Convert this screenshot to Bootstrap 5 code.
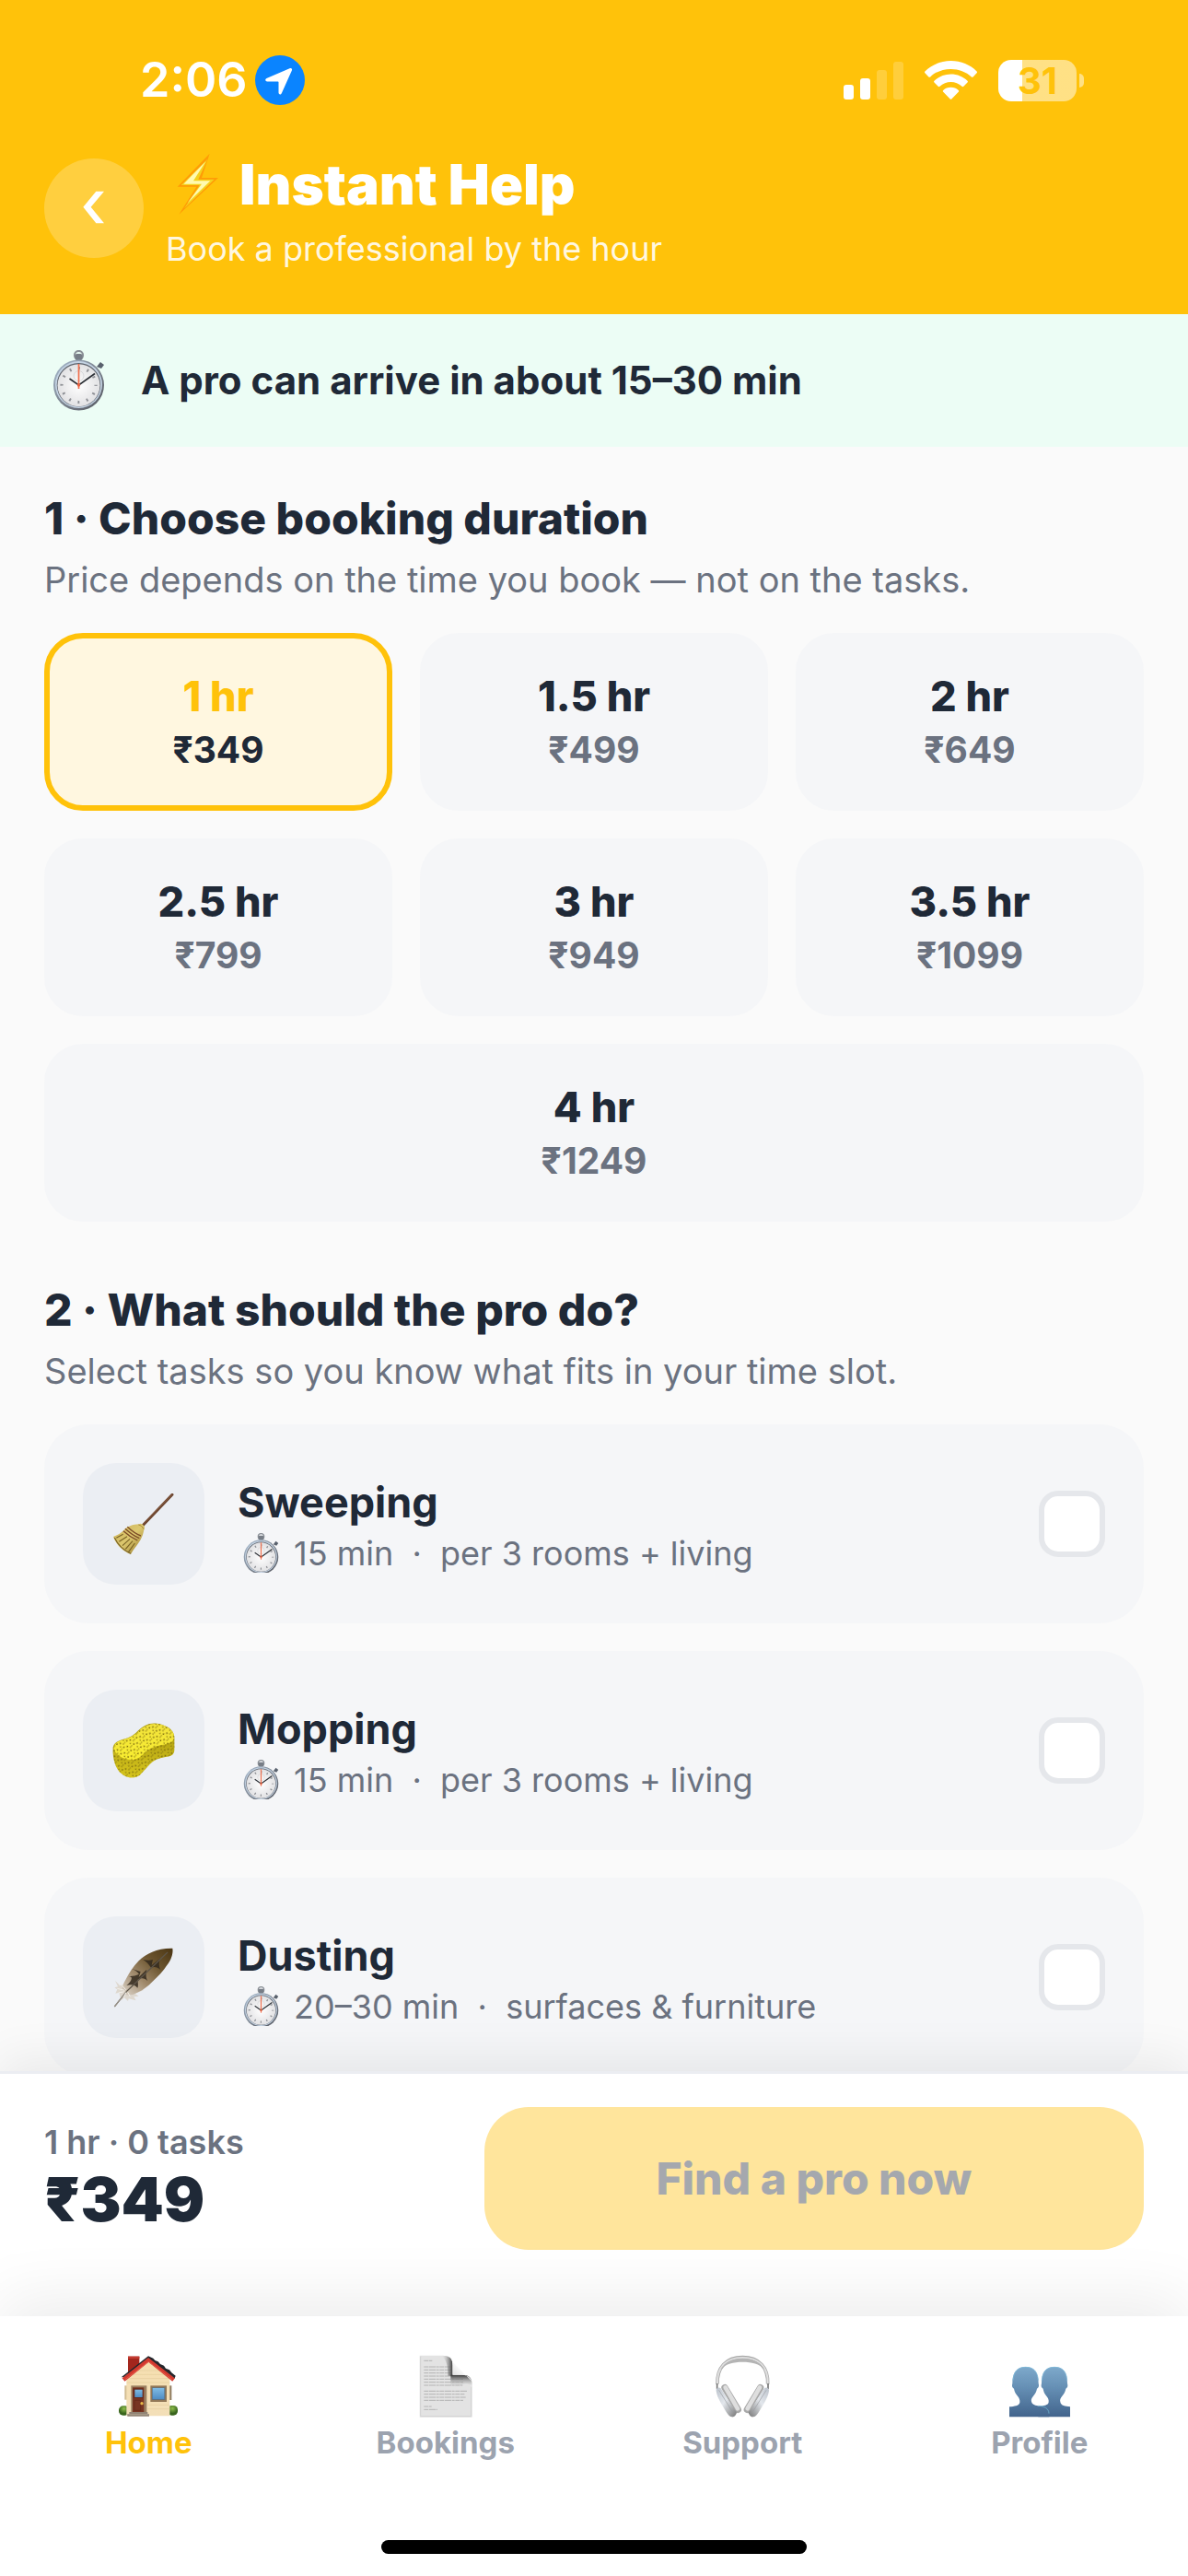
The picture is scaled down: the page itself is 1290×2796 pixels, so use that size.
<!DOCTYPE html>
<html lang="en">
<head>
<meta charset="utf-8">
<meta name="viewport" content="width=device-width, initial-scale=1">
<title>Instant Help</title>
<link rel="stylesheet" href="https://cdn.jsdelivr.net/npm/bootstrap@5.3.0/dist/css/bootstrap.min.css">
<style>
  :root { --brand:#ffc20a; --ink:#1f2937; --muted:#6b7280; --faint:#9ca3af; --tile:#f5f6f8; }
  body { font-family: Inter, "Liberation Sans", sans-serif; background:#fafafa; color:var(--ink); height:100vh; }
  .px-page { padding-left:48px; padding-right:48px; }
  .app-head { background:var(--brand); color:#fff; padding-bottom:49px; }
  .status { padding:60px 113px 46px 152px; }
  .clock { font-size:52px; line-height:54px; font-weight:600; }
  .status-left { gap:8px; }
  .status-right { gap:23px; }
  .battery { gap:3px; }
  .battery-body { width:85px; height:45px; border-radius:14px; background:linear-gradient(90deg, #fff 26px, rgba(255,255,255,.5) 26px); color:var(--brand); font-size:40px; line-height:45px; font-weight:700; }
  .battery-nub { width:5px; height:15px; border-radius:0 5px 5px 0; background:rgba(255,255,255,.5); }
  .back { width:108px; height:108px; background:rgba(255,255,255,.22); border:0; }
  .head-row { gap:24px; }
  .head-title { font-size:60px; line-height:80px; font-weight:900; margin:0; gap:22px; padding-left:12px; }
  .head-sub { font-size:36px; line-height:44px; margin:8px 0 0; color:rgba(255,255,255,.9); }
  .eta { background:#ecfdf5; height:144px; gap:30px; font-size:42px; line-height:54px; font-weight:700; }
  .eta-icon { width:75px; }
  .content { flex:1 1 0; min-height:0; overflow-y:auto; scrollbar-width:none; padding-top:48px; padding-bottom:48px; }
  .content::-webkit-scrollbar { display:none; }
  .sec-title { font-size:48px; line-height:60px; font-weight:800; margin:0 0 12px; }
  .sec-sub { font-size:38px; line-height:48px; color:var(--muted); margin:0 0 34px; }
  .slots { --bs-gutter-x:30px; --bs-gutter-y:30px; margin-bottom:66px; }
  .slot { display:flex; flex-direction:column; align-items:center; gap:7px; padding:36px 12px; border:6px solid var(--tile); border-radius:42px; background:var(--tile); cursor:pointer; }
  .slot-time { font-size:45px; line-height:54px; font-weight:800; }
  .slot-price { font-size:39px; line-height:48px; font-weight:700; color:var(--muted); }
  .btn-check:checked + .slot { background:#fff7e0; border-color:var(--brand); }
  .btn-check:checked + .slot .slot-time { color:var(--brand); }
  .btn-check:checked + .slot .slot-price { color:var(--ink); }
  .tasks { gap:30px; }
  .task { background:var(--tile); border-radius:48px; padding:42px; gap:36px; cursor:pointer; }
  .task-icon { width:132px; height:132px; border-radius:36px; background:#ebeef3; }
  .task-text { padding-top:3px; }
  .task-name { font-size:45px; line-height:54px; font-weight:700; margin-bottom:6px; }
  .task-meta { font-size:36px; line-height:44px; color:var(--muted); gap:16px; padding-left:6px; }
  .task .form-check-input { width:72px; height:72px; border:6px solid #e5e7eb; border-radius:21px; margin:0; background-color:#fff; }
  .book-bar { z-index:2; background:#fff; border-top:3px solid #ebedf2; padding-top:36px; padding-bottom:72px; box-shadow:0 -12px 48px rgba(0,0,0,.07); }
  .sum-line { font-size:36px; line-height:44px; font-weight:600; color:var(--muted); }
  .sum-price { font-size:66px; line-height:80px; font-weight:900; }
  .cta { width:60%; border:0; border-radius:48px; padding:48px; font-size:48px; line-height:59px; font-weight:800; background:#ffe59c; color:#a5a8ae; }
  .tabs { z-index:3; background:#fff; padding:42px 0 24px; box-shadow:0 -18px 66px rgba(0,0,0,.075); }
  .tab-link { gap:7px; font-size:33px; line-height:40px; font-weight:700; color:var(--faint); text-decoration:none; }
  .tab-link.active { color:var(--brand); }
  .home-bar { width:462px; max-width:60%; height:15px; border-radius:8px; background:#000; margin:86px auto 0; }
  svg { display:block; flex:none; }
</style>
<script src="https://cdn.jsdelivr.net/npm/bootstrap@5.3.0/dist/js/bootstrap.bundle.min.js"></script>
</head>
<body class="d-flex flex-column overflow-hidden">

<svg width="0" height="0" class="position-absolute" aria-hidden="true">
  <defs>
    <linearGradient id="rim" x1="0" y1="0" x2="1" y2="1"><stop offset="0" stop-color="#a9bdd2"/><stop offset=".5" stop-color="#7d8590"/><stop offset="1" stop-color="#53565e"/></linearGradient>
    <radialGradient id="dial"><stop offset="0" stop-color="#fff"/><stop offset="1" stop-color="#e2e2e4"/></radialGradient>
    <symbol id="watch" viewBox="0 0 57 66">
      <circle cx="28.500" cy="5.500" r="4.600" fill="none" stroke="#8b9097" stroke-width="2"/>
      <rect x="24.500" y="4" width="8" height="7" rx="2" fill="#777d86"/>
      <path d="M48 18l4-5 4 3-3 4z" fill="#59616d"/>
      <circle cx="28.500" cy="38" r="27.500" fill="url(#rim)"/>
      <circle cx="28.500" cy="37.500" r="25.500" fill="#c4d3e3"/>
      <circle cx="28.500" cy="37.800" r="23.800" fill="#5e636c"/>
      <circle cx="28.500" cy="38.200" r="23" fill="url(#dial)"/>
      <circle cx="28.500" cy="38" r="18.500" fill="none" stroke="#8f9196" stroke-width="3.200" stroke-dasharray="1.900 7.787" stroke-dashoffset="1"/>
      <circle cx="28.500" cy="28" r="5.500" fill="none" stroke="#cfd0d3" stroke-width=".8"/>
      <path d="M18.500 31l10 7L46 25.500" fill="none" stroke="#2c3036" stroke-width="1.700"/>
      <path d="M28.500 15v27" stroke="#f0704f" stroke-width="1.700"/>
      <circle cx="28.500" cy="38" r="1.700" fill="#e8603f"/>
    </symbol>
  </defs>
</svg>

<header class="app-head">
  <div class="status d-flex justify-content-between align-items-center">
    <div class="status-left d-flex align-items-center">
      <span class="clock">2:06</span>
      <svg width="54" height="54" viewBox="0 0 54 54" aria-hidden="true"><circle cx="27" cy="27" r="27" fill="#0a84ff"/><path d="M37.500 14.200c1.800-.8 3.200.4 2.400 2.400L28.800 41.200c-.9 1.900-3.300 1.500-3.300-.6V29.200c0-.5-.3-.8-.8-.8H13.200c-2.200 0-2.700-2.400-.7-3.300z" fill="#fff"/></svg>
    </div>
    <div class="status-right d-flex align-items-center">
      <svg width="65" height="42" viewBox="0 0 65 42" fill="#fff" aria-hidden="true"><rect y="26" width="11" height="16" rx="3"/><rect x="18" y="19" width="11" height="23" rx="3"/><rect x="36" y="10" width="11" height="32" rx="3" opacity=".2"/><rect x="54" y="1" width="11" height="41" rx="3" opacity=".2"/></svg>
      <svg width="57" height="42" viewBox="0 0 57 42" fill="#fff" aria-hidden="true"><path d="M28.500 0C17.500 0 7.500 4.300.4 11.400c-.6.600-.6 1.200 0 1.800l4 4.200c.6.600 1.200.6 1.800 0C12 11.900 19.900 8.900 28.500 8.900s16.500 3 22.300 8.500c.6.600 1.200.6 1.800 0l4-4.200c.6-.6.600-1.200 0-1.800C49.500 4.300 39.500 0 28.500 0z"/><path d="M28.500 14.500c-7 0-13.300 2.700-18 7.200-.6.600-.6 1.200 0 1.800l4.200 4.300c.6.600 1.200.5 1.800 0 3.300-3 7.500-4.800 12-4.800s8.700 1.800 12 4.800c.6.500 1.200.6 1.800 0l4.200-4.300c.6-.6.600-1.200 0-1.800-4.700-4.500-11-7.200-18-7.200z"/><path d="M28.500 28.700c-3.200 0-6.100 1.200-8.300 3.200-.6.500-.6 1.200 0 1.800l7.300 7.600c.6.700 1.400.7 2 0l7.300-7.600c.6-.6.600-1.300 0-1.800-2.200-2-5.100-3.200-8.300-3.200z"/></svg>
      <div class="battery d-flex align-items-center"><span class="battery-body text-center">31</span><span class="battery-nub"></span></div>
    </div>
  </div>
  <div class="head-row px-page d-flex align-items-center">
    <button type="button" class="back rounded-circle d-flex align-items-center justify-content-center flex-shrink-0 p-0" aria-label="Back">
      <svg width="26" height="38" viewBox="174 167 78 114"><path d="M220 169h26l-43 51 43 53h-26l-42-53z" fill="#fff"/></svg>
    </button>
    <div>
      <h1 class="head-title d-flex align-items-center">
        <svg width="46" height="68" viewBox="486 52 138 204" aria-hidden="true"><path d="M593 54L488 162h62L493 252l128-119h-54z" fill="#ff9c06"/><path d="M586 72L500 157h60l-50 76 98-95h-52z" fill="#f5d21e"/><path d="M580 80L508 153h59l-46 62 74-72h-55z" fill="#fffbb0"/></svg>
        <span>Instant Help</span>
      </h1>
      <p class="head-sub">Book a professional by the hour</p>
    </div>
  </div>
</header>

<div class="eta px-page d-flex align-items-center">
  <div class="eta-icon d-flex justify-content-center"><svg width="57" height="66" aria-hidden="true"><use href="#watch"/></svg></div>
  <span>A pro can arrive in about 15–30 min</span>
</div>

<main class="content px-page">
  <h2 class="sec-title">1 · Choose booking duration</h2>
  <p class="sec-sub">Price depends on the time you book — not on the tasks.</p>
  <div class="slots row row-cols-3">
    <div class="col"><input class="btn-check" type="radio" name="slot" id="s1" checked><label class="slot" for="s1"><span class="slot-time">1 hr</span><span class="slot-price">₹349</span></label></div>
    <div class="col"><input class="btn-check" type="radio" name="slot" id="s2"><label class="slot" for="s2"><span class="slot-time">1.5 hr</span><span class="slot-price">₹499</span></label></div>
    <div class="col"><input class="btn-check" type="radio" name="slot" id="s3"><label class="slot" for="s3"><span class="slot-time">2 hr</span><span class="slot-price">₹649</span></label></div>
    <div class="col"><input class="btn-check" type="radio" name="slot" id="s4"><label class="slot" for="s4"><span class="slot-time">2.5 hr</span><span class="slot-price">₹799</span></label></div>
    <div class="col"><input class="btn-check" type="radio" name="slot" id="s5"><label class="slot" for="s5"><span class="slot-time">3 hr</span><span class="slot-price">₹949</span></label></div>
    <div class="col"><input class="btn-check" type="radio" name="slot" id="s6"><label class="slot" for="s6"><span class="slot-time">3.5 hr</span><span class="slot-price">₹1099</span></label></div>
    <div class="col-12"><input class="btn-check" type="radio" name="slot" id="s7"><label class="slot" for="s7"><span class="slot-time">4 hr</span><span class="slot-price">₹1249</span></label></div>
  </div>

  <h2 class="sec-title">2 · What should the pro do?</h2>
  <p class="sec-sub">Select tasks so you know what fits in your time slot.</p>
  <div class="tasks d-flex flex-column">
    <label class="task d-flex align-items-center" for="t1">
      <span class="task-icon d-flex align-items-center justify-content-center flex-shrink-0">
        <svg width="66" height="66" viewBox="128 152 198 198" aria-hidden="true">
          <defs><linearGradient id="straw" x1="0" y1="0" x2="1" y2="1"><stop offset="0" stop-color="#cdb35a"/><stop offset=".5" stop-color="#dcc76e"/><stop offset="1" stop-color="#94782a"/></linearGradient></defs>
          <path d="M320 156L224 256" stroke="#6d4630" stroke-width="9" stroke-linecap="round"/>
          <path d="M319 155L224 252" stroke="#94664a" stroke-width="2"/>
          <path d="M212 252c5-4 12 0 17 7 3 4-1 9-2 16-3 14-8 26-17 38-8 12-17 22-25 37-24-9-46-28-57-57 14-6 26-12 34-21 12-13 30-19 50-20z" fill="url(#straw)"/>
          <path d="M138 297l22-12M147 309l26-17M158 322l24-22M168 333l23-26M178 342l20-28M132 296c10 22 28 40 53 52" stroke="#7a6324" stroke-width="3.500" fill="none"/>
          <path d="M174 261c13 12 27 24 44 29M167 267c14 13 29 24 46 31M161 274c13 12 29 23 46 31" stroke="#7b4a26" stroke-width="4" fill="none"/>
          <path d="M210 254c7 1 14 7 17 14" stroke="#a88a3d" stroke-width="3" fill="none"/>
        </svg>
      </span>
      <span class="task-text flex-grow-1">
        <span class="task-name d-block">Sweeping</span>
        <span class="task-meta d-flex align-items-center"><svg width="39" height="43" viewBox="0 0 57 63" aria-hidden="true"><use href="#watch" width="57" height="66"/></svg><span>15 min &nbsp;·&nbsp; per 3 rooms + living</span></span>
      </span>
      <input class="form-check-input flex-shrink-0" type="checkbox" id="t1">
    </label>

    <label class="task d-flex align-items-center" for="t2">
      <span class="task-icon d-flex align-items-center justify-content-center flex-shrink-0">
        <svg width="68" height="68" viewBox="125 145 204 204" aria-hidden="true">
          <defs>
            <linearGradient id="foam" x1="0" y1="0" x2="0" y2="1"><stop offset="0" stop-color="#f1e23c"/><stop offset="1" stop-color="#f9ee30"/></linearGradient>
            <linearGradient id="foamside" x1="0" y1="0" x2="0" y2="1"><stop offset="0" stop-color="#a8980f"/><stop offset="1" stop-color="#d6c51c"/></linearGradient>
            <pattern id="pores" width="25" height="23" patternUnits="userSpaceOnUse" patternTransform="rotate(24)"><g fill="#7d6c10"><circle cx="4" cy="5" r="2.600"/><circle cx="14" cy="3" r="2"/><circle cx="20" cy="12" r="2.700"/><circle cx="9" cy="15" r="2.200"/><circle cx="16" cy="20" r="1.900"/></g></pattern>
          </defs>
          <path d="M127 238c2-18 20-24 42-30 14-4 24-10 38-24 20-20 44-30 70-24 28 7 48 20 50 42v42c0 12-5 19-17 22-20 4-38 6-54 18-16 14-28 30-40 42-18 14-42 13-62-4-18-15-29-46-27-84z" fill="url(#foamside)"/>
          <path d="M129 238c3-17 20-23 42-29 14-4 24-10 38-24 20-20 44-29 68-24 28 7 46 20 49 38 1 15-7 22-22 26-24 6-44 7-60 19-16 12-30 29-46 32-32 5-66-15-69-38z" fill="url(#foam)"/>
          <path d="M127 238c2-18 20-24 42-30 14-4 24-10 38-24 20-20 44-30 70-24 28 7 48 20 50 42v42c0 12-5 19-17 22-20 4-38 6-54 18-16 14-28 30-40 42-18 14-42 13-62-4-18-15-29-46-27-84z" fill="url(#pores)"/>
        </svg>
      </span>
      <span class="task-text flex-grow-1">
        <span class="task-name d-block">Mopping</span>
        <span class="task-meta d-flex align-items-center"><svg width="39" height="43" viewBox="0 0 57 63" aria-hidden="true"><use href="#watch" width="57" height="66"/></svg><span>15 min &nbsp;·&nbsp; per 3 rooms + living</span></span>
      </span>
      <input class="form-check-input flex-shrink-0" type="checkbox" id="t2">
    </label>

    <label class="task d-flex align-items-center" for="t3">
      <span class="task-icon d-flex align-items-center justify-content-center flex-shrink-0">
        <svg width="66" height="66" viewBox="129 160 198 198" aria-hidden="true">
          <defs><linearGradient id="plume" x1="1" y1="0" x2="0" y2="1"><stop offset="0" stop-color="#4a3512"/><stop offset=".35" stop-color="#6d5630"/><stop offset=".65" stop-color="#a08a6c"/><stop offset="1" stop-color="#ddd5ca"/></linearGradient></defs>
          <path d="M150 286l-15-16 9 20-11 3 9 6-6 13 12-3 3 13 4 12 10-8 12 11 2-8 24 6-7-12 16-2-12-8 28-12-10-6 20-10-40-10z" fill="#ded8cf"/>
          <path d="M322 165c3 18-5 38-18 55-12 19-30 38-50 56-12 12-24 22-44 32-18 10-34 14-46 4-10-10-6-26 6-46 10-20 24-42 42-60 24-24 60-42 110-41z" fill="url(#plume)"/>
          <path d="M190 232l28 9-6 18 26-25c-4 18-2 30 4 38-12-12-22-12-34-4 2 12 3 20 0 26-10-10-18-12-36-8 10-8 16-16 17-25-2-4-8-6-14-6 12 2 26 0 38-6-6-8-14-14-23-17zM226 202c12 2 22 3 32 0l-4 18 28-22c-6 16-4 28 2 38-12-10-20-12-32-8-8-12-16-20-26-26z" fill="#32291d" opacity=".85"/>
          <path d="M306 178L174 304l-41 51" fill="none" stroke="#5e564a" stroke-width="3.500"/>
          <path d="M172 306l-39 49" stroke="#99938a" stroke-width="4"/>
          <path d="M142 296l24 6M146 310l20-4M162 326l8-16M184 322l-8-14M150 278l20 22" stroke="#f3f0ea" stroke-width="3"/>
        </svg>
      </span>
      <span class="task-text flex-grow-1">
        <span class="task-name d-block">Dusting</span>
        <span class="task-meta d-flex align-items-center"><svg width="39" height="43" viewBox="0 0 57 63" aria-hidden="true"><use href="#watch" width="57" height="66"/></svg><span>20–30 min &nbsp;·&nbsp; surfaces &amp; furniture</span></span>
      </span>
      <input class="form-check-input flex-shrink-0" type="checkbox" id="t3">
    </label>
  </div>
</main>

<section class="book-bar px-page position-relative d-flex align-items-center justify-content-between">
  <div>
    <div class="sum-line">1 hr · 0 tasks</div>
    <div class="sum-price">₹349</div>
  </div>
  <button type="button" class="cta">Find a pro now</button>
</section>

<nav class="tabs position-relative" aria-label="Main">
  <div class="row row-cols-4 g-0">
    <div class="col"><a href="#home" class="tab-link active d-flex flex-column align-items-center" aria-current="page">
      <svg width="68" height="68" viewBox="140 167 204 204" aria-hidden="true">
        <defs>
          <linearGradient id="wall" x1="0" y1="0" x2="0" y2="1"><stop offset="0" stop-color="#f6dfb0"/><stop offset="1" stop-color="#f3dfb8"/></linearGradient>
          <linearGradient id="pane" x1="0" y1="0" x2="0" y2="1"><stop offset="0" stop-color="#7fbbe4"/><stop offset="1" stop-color="#4f8dc4"/></linearGradient>
          <radialGradient id="bush" cy=".3"><stop offset="0" stop-color="#8fbf4d"/><stop offset="1" stop-color="#38641c"/></radialGradient>
        </defs>
        <rect x="146" y="333" width="34" height="31" rx="14" fill="url(#bush)"/><rect x="304" y="332" width="34" height="32" rx="14" fill="url(#bush)"/>
        <rect x="165" y="267" width="8" height="46" fill="#d3bd93"/><rect x="311" y="267" width="7" height="47" fill="#8f7b60"/>
        <rect x="176" y="172" width="37" height="60" fill="#a3261d"/><rect x="176" y="172" width="37" height="7" fill="#c43a30"/>
        <path d="M171 366V245l72-60 69 60v121z" fill="url(#wall)"/>
        <path d="M190 231h104M205 218h78M178 244h130M172 257h140M239 330h73M239 343h73" stroke="#dfc695" stroke-width="1.500"/>
        <path d="M161 248l82-66 82 66" fill="none" stroke="#d33a2f" stroke-width="14"/>
        <path d="M154 240l88-69 16 7 6 7 10 4 7 8 12 5 6 9 12 5 7 9 13 10-3 8-86-67-80 63z" fill="#25262b"/>
        <path d="M167 247l76-58 76 58" fill="none" stroke="#ee6a57" stroke-width="2"/>
        <rect x="186" y="267" width="51" height="87" fill="#9a7f60"/><rect x="191" y="273" width="37" height="80" fill="#783422"/>
        <rect x="195" y="277" width="30" height="30" fill="#5a2518"/><rect x="198" y="280" width="25" height="25" fill="url(#pane)"/>
        <path d="M197 315h20v33h-20z" fill="none" stroke="#5f2718" stroke-width="2"/><circle cx="221" cy="325" r="5" fill="#e9b846"/>
        <path d="M180 353h60v6h5v8h-71v-8h6z" fill="#908374"/><path d="M174 361h71" stroke="#b9ac9b" stroke-width="2"/>
        <rect x="249" y="267" width="53" height="53" fill="#927858"/><rect x="254" y="273" width="43" height="41" fill="#5d6f7e"/><rect x="256" y="275" width="38" height="36" fill="url(#pane)"/>
      </svg><span>Home</span></a></div>
    <div class="col"><a href="#bookings" class="tab-link d-flex flex-column align-items-center">
      <svg width="68" height="68" viewBox="1108 166 204 204" aria-hidden="true">
        <defs>
          <linearGradient id="curl" x1="0" y1="1" x2="1" y2="0"><stop offset="0" stop-color="#c9c9c9"/><stop offset=".5" stop-color="#f7f7f7"/><stop offset="1" stop-color="#d5d5d5"/></linearGradient>
          <linearGradient id="shadeh" x1="0" y1="0" x2="1" y2="0"><stop offset="0" stop-color="#e2e2e2" stop-opacity="0"/><stop offset="1" stop-color="#333"/></linearGradient>
          <linearGradient id="shadev" x1="0" y1="0" x2="0" y2="1"><stop offset="0" stop-color="#333"/><stop offset="1" stop-color="#e2e2e2" stop-opacity="0"/></linearGradient>
        </defs>
        <path d="M1125 168h75c22 0 33 8 33 32v31h30c23 0 33 9 33 34v104h-171z" fill="#e3e3e3"/>
        <path d="M1128 171v195h165v-96" fill="none" stroke="#d2d2d2" stroke-width="3"/>
        <path d="M1139 185h27M1139 205h88M1139 215h90M1139 225h92M1139 235h92M1139 245h128M1139 255h128M1139 265h126M1139 284h140M1139 294h132M1139 304h136M1139 314h128M1139 334h25M1139 344h44" stroke="#b4b4b4" stroke-width="3" stroke-dasharray="14 2 22 2 9 2"/>
        <path d="M1196 168c26 0 37 8 37 32v34h-16c0-30-3-52-21-66z" fill="url(#shadeh)"/>
        <path d="M1226 231h37c23 0 33 9 33 34-14-7-30-10-44 7h-26z" fill="url(#shadev)"/>
        <path d="M1210 169c15 2 22 10 24 22l60 60c-4-13-15-20-31-20h-31v-31c0-19-6-28-22-31z" fill="url(#curl)"/>
      </svg><span>Bookings</span></a></div>
    <div class="col"><a href="#support" class="tab-link d-flex flex-column align-items-center">
      <svg width="68" height="68" viewBox="214 167 204 204" aria-hidden="true">
        <defs>
          <linearGradient id="cup" x1="0" y1="0" x2="1" y2="1"><stop offset="0" stop-color="#bcc3cc"/><stop offset=".45" stop-color="#e3e7ec"/><stop offset="1" stop-color="#777"/></linearGradient>
          <linearGradient id="cupr" x1="1" y1="0" x2="0" y2="1"><stop offset="0" stop-color="#bcc3cc"/><stop offset=".45" stop-color="#e3e7ec"/><stop offset="1" stop-color="#777"/></linearGradient>
        </defs>
        <path d="M235 262c-2-54 28-87 82-87s84 33 82 87" fill="none" stroke="#a9a9a9" stroke-width="11"/>
        <path d="M235 260c-2-52 28-84 82-84s84 32 82 84" fill="none" stroke="#e0e0e0" stroke-width="6"/>
        <path d="M245 214c14-24 40-36 72-36s58 12 72 36c-18-18-42-24-72-24s-54 6-72 24z" fill="#b4b4b4"/>
        <path d="M234 260v18M400 260v18" stroke="#777" stroke-width="5"/>
        <path d="M259 274l43 71" stroke="#a9a9a9" stroke-width="22" stroke-linecap="round"/><path d="M261 273l40 69" stroke="#dedede" stroke-width="14" stroke-linecap="round"/>
        <path d="M375 274l-43 71" stroke="#a9a9a9" stroke-width="22" stroke-linecap="round"/><path d="M373 273l-40 69" stroke="#dedede" stroke-width="14" stroke-linecap="round"/>
        <path d="M231 284c-1-9 8-13 15-8l45 69c3 6 10 8 5 15-3 6-7 10-13 9-7 0-13-7-17-13-12-20-32-48-35-72z" fill="url(#cup)"/>
        <path d="M403 284c1-9-8-13-15-8l-45 69c-3 6-10 8-5 15 3 6 7 10 13 9 7 0 13-7 17-13 12-20 32-48 35-72z" fill="url(#cupr)"/>
        <path d="M240 282l45 72M394 282l-45 72" stroke="#9a9da1" stroke-width="2"/>
      </svg><span>Support</span></a></div>
    <div class="col"><a href="#profile" class="tab-link d-flex flex-column align-items-center">
      <svg width="68" height="68" viewBox="1184 167 204 204" aria-hidden="true">
        <defs><linearGradient id="folk" gradientUnits="userSpaceOnUse" x1="0" y1="206" x2="0" y2="369"><stop offset="0" stop-color="#7ea9cb"/><stop offset=".4" stop-color="#6690b5"/><stop offset="1" stop-color="#42648c"/></linearGradient></defs>
        <path d="M1281 336c18-4 33-4 34-15 1-9-2-14-7-20-7-8-9-15-11-24-7-4-7-9-5-17 0-34 12-54 42-54s42 20 42 54c2 8 2 13-5 17-2 9-5 16-12 24-5 6-8 11-6 19 2 13 16 14 32 16v33h-104z" fill="url(#folk)"/>
        <path d="M1187 369v-33c17-2 31-3 34-14 1-9-2-15-7-21-7-8-10-15-12-24-7-4-7-9-5-17 0-34 13-54 43-54s42 20 42 54c2 8 2 13-5 17-2 9-5 16-12 24-5 6-8 11-6 18 3 13 20 13 33 16 13 3 25 10 25 34z" fill="url(#folk)"/>
        <path d="M1281 333c20 0 35 9 35 25" fill="none" stroke="#6cb0cf" stroke-width="2.500"/>
        <path d="M1199 250c2-28 14-43 41-43s39 15 41 43M1293 250c2-28 14-43 41-43s39 15 41 43" fill="none" stroke="#7fb9d8" stroke-width="2.500"/>
      </svg><span>Profile</span></a></div>
  </div>
  <div class="home-bar"></div>
</nav>
</body>
</html>
